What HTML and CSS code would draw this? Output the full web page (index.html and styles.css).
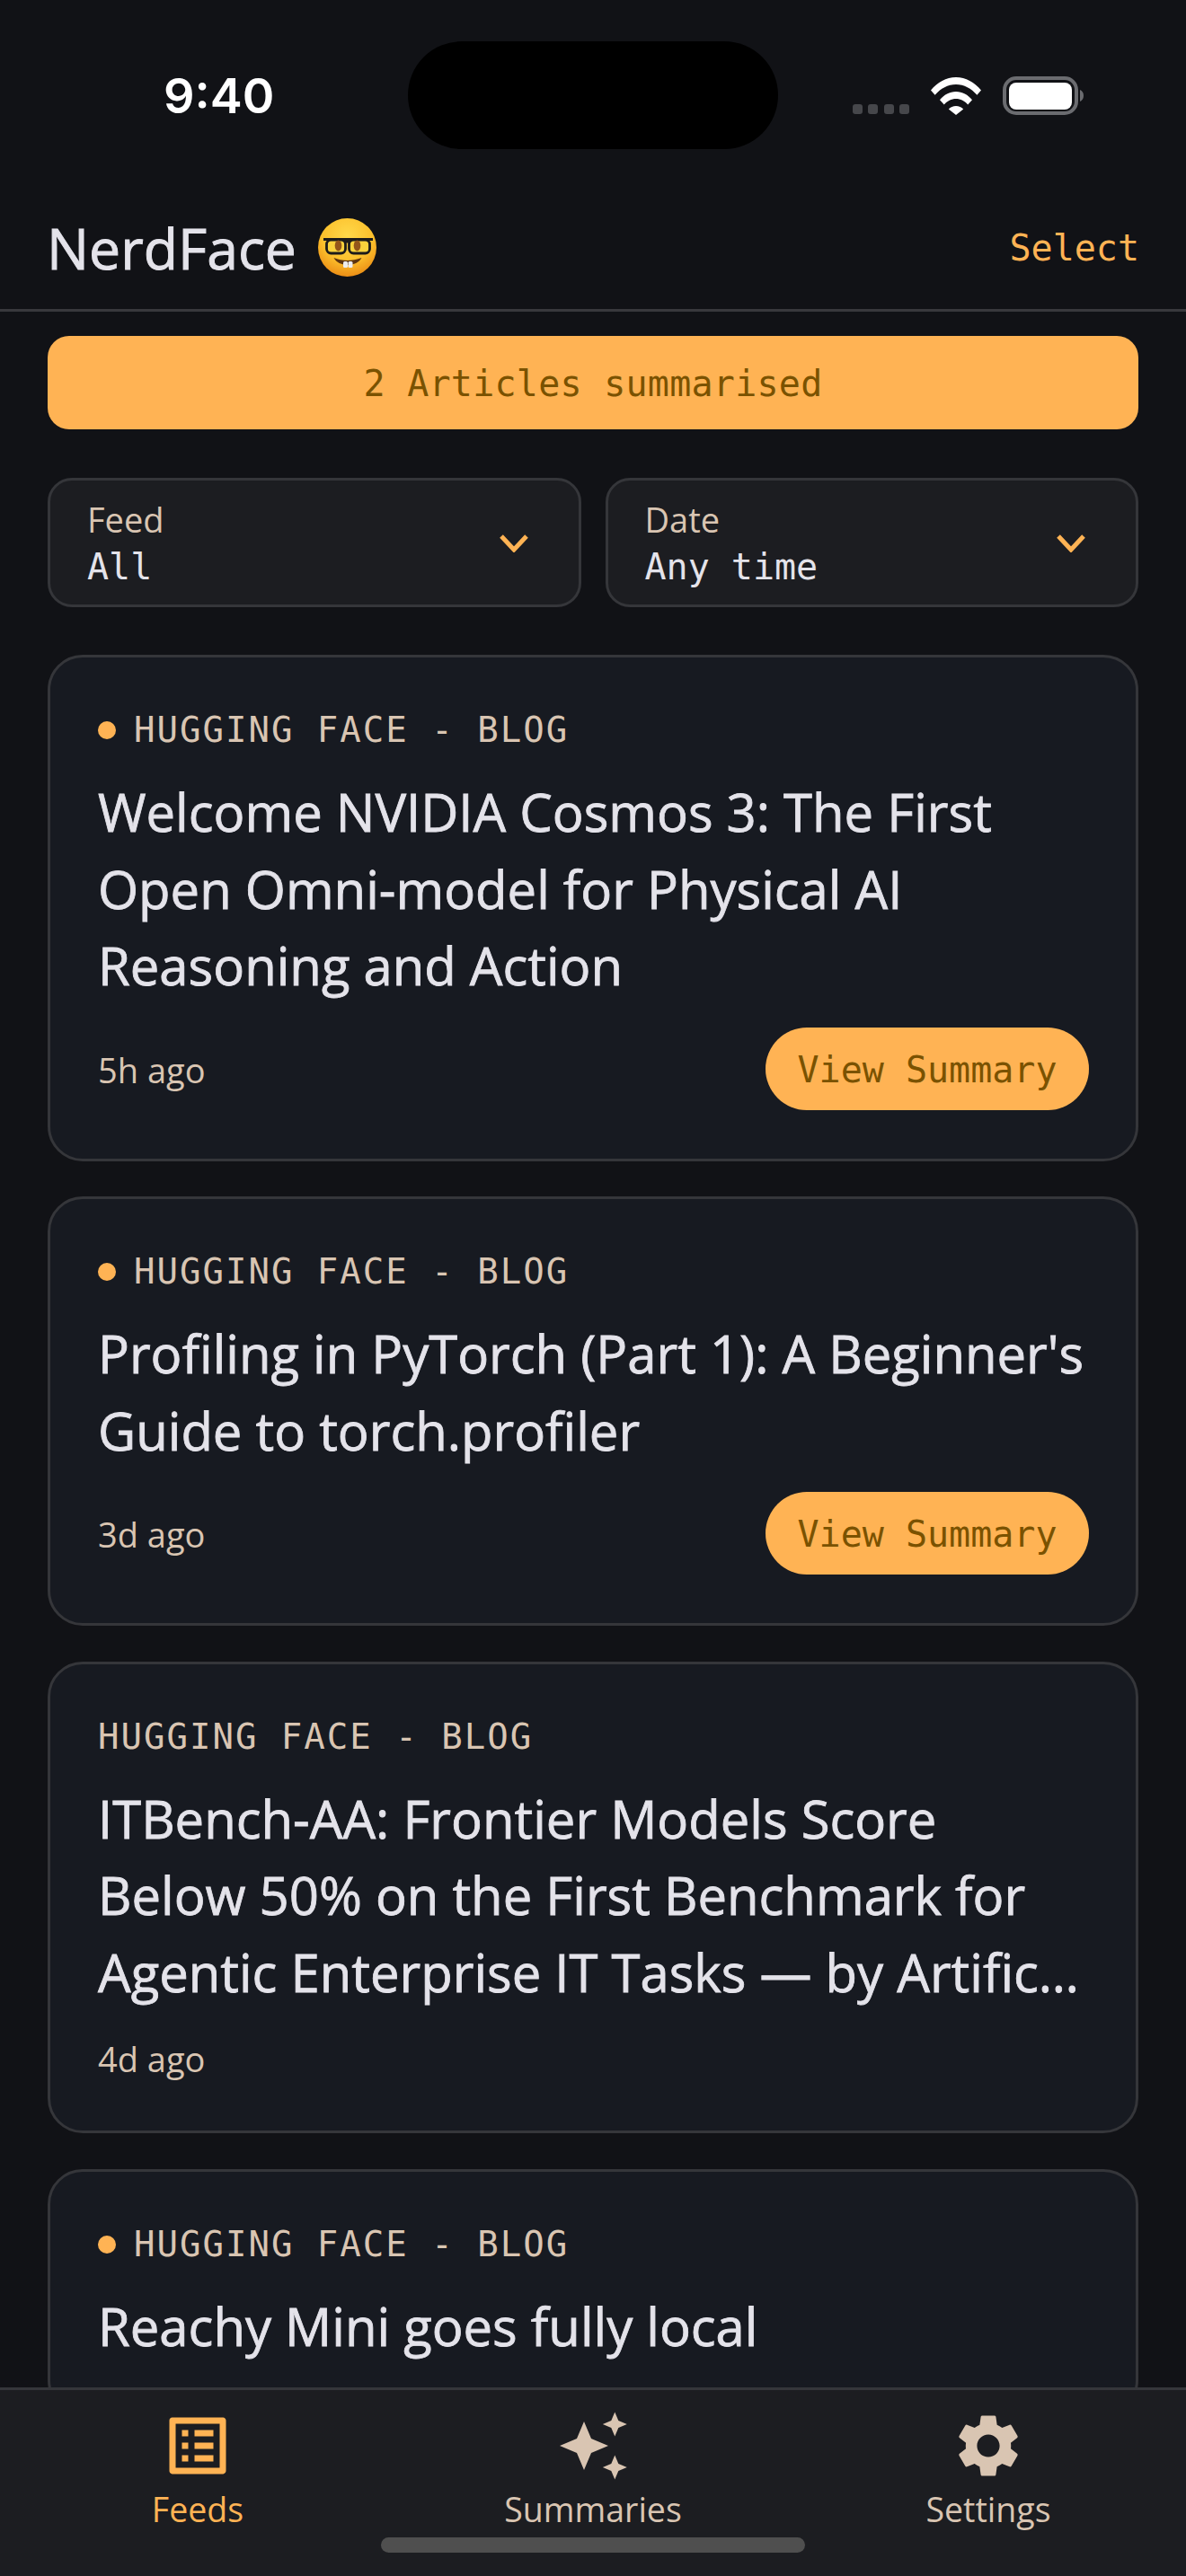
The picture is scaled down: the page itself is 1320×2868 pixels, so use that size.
FILE: index.html
```html
<!DOCTYPE html>
<html lang="en">
<head>
<meta charset="utf-8">
<title>NerdFace</title>
<link rel="stylesheet" href="styles.css">
</head>
<body>
<div class="phone">
  <div class="status">
    <span class="time">9:40</span>
    <div class="island"></div>
    <div class="status-icons">
      <div class="signal"><i></i><i></i><i></i><i></i></div>
      <svg class="wifi" viewBox="0 0 56 42"><path d="M0 14.500C7.500 5.500 17 0 28 0s20.500 5.500 28 14.500l-4.600 5.200C45 12.500 37 8 28 8S11 12.500 4.600 19.700z"/><path d="M10 25.200C14.500 19.600 21 16 28 16s13.500 3.600 18 9.200l-4.800 5.200C37.800 26.500 33.200 24 28 24s-9.800 2.500-13.200 6.400z"/><path d="M19.800 35.600C21.800 33.300 24.800 32 28 32s6.200 1.300 8.200 3.600L28 42z"/></svg>
      <svg class="battery" viewBox="0 0 90 43"><rect x="2" y="2" width="80" height="39" rx="13" fill="none" stroke="#6b6c70" stroke-width="4"/><rect x="7" y="7" width="70" height="30" rx="8" fill="#fff"/><path d="M86 15c2.500 1 4 3.500 4 6.500s-1.500 5.500-4 6.500z" fill="#6b6c70"/></svg>
    </div>
  </div>
  <header class="topbar">
    <div class="brand"><span>NerdFace</span>
      <svg class="emoji" viewBox="0 0 65 65">
        <defs><radialGradient id="face" cx="50%" cy="30%" r="72%"><stop offset="0" stop-color="#ffd94a"/><stop offset=".6" stop-color="#fcc02c"/><stop offset="1" stop-color="#ea8a14"/></radialGradient></defs>
        <circle cx="32.500" cy="32.500" r="32.500" fill="url(#face)"/>
        <rect x="9.500" y="24" width="21" height="15" rx="5" fill="#f8d23c" stroke="#1c1b1a" stroke-width="2.800"/>
        <rect x="34.500" y="24" width="23" height="15" rx="5" fill="#f8d23c" stroke="#1c1b1a" stroke-width="2.800"/>
        <path d="M6 23.500h55M30 26h5" stroke="#1c1b1a" stroke-width="3" fill="none"/>
        <ellipse cx="22.500" cy="30.500" rx="3.800" ry="6" fill="#93561a"/><ellipse cx="43.500" cy="30.500" rx="3.800" ry="6" fill="#93561a"/>
        <path d="M17.500 44c9.500 4 20.500 4 31 0-5 10.500-26 10.500-31 0z" fill="#5c3410"/>
        <rect x="28" y="48" width="5" height="7" rx="1.500" fill="#eee"/><rect x="33.500" y="48" width="5" height="7" rx="1.500" fill="#eee"/>
      </svg>
    </div>
    <span class="select">Select</span>
  </header>
  <main class="content">
    <div class="banner">2 Articles summarised</div>
    <div class="filters">
      <div class="filter">
        <div class="filter-text"><span class="filter-label">Feed</span><span class="filter-value">All</span></div>
        <svg class="chev" viewBox="0 0 32 20"><path d="M2 2l14 15L30 2"/></svg>
      </div>
      <div class="filter">
        <div class="filter-text"><span class="filter-label">Date</span><span class="filter-value">Any time</span></div>
        <svg class="chev" viewBox="0 0 32 20"><path d="M2 2l14 15L30 2"/></svg>
      </div>
    </div>
    <article class="card">
      <div class="tag"><i class="dot"></i>HUGGING FACE - BLOG</div>
      <h2 class="title">Welcome NVIDIA Cosmos 3: The First Open Omni-model for Physical AI Reasoning and Action</h2>
      <div class="meta"><span class="ago">5h ago</span><span class="btn">View Summary</span></div>
    </article>
    <article class="card">
      <div class="tag"><i class="dot"></i>HUGGING FACE - BLOG</div>
      <h2 class="title">Profiling in PyTorch (Part 1): A Beginner's Guide to torch.profiler</h2>
      <div class="meta"><span class="ago">3d ago</span><span class="btn">View Summary</span></div>
    </article>
    <article class="card">
      <div class="tag">HUGGING FACE - BLOG</div>
      <h2 class="title">ITBench-AA: Frontier Models Score Below 50% on the First Benchmark for Agentic Enterprise IT Tasks — by Artific…</h2>
      <div class="meta"><span class="ago">4d ago</span></div>
    </article>
    <article class="card">
      <div class="tag"><i class="dot"></i>HUGGING FACE - BLOG</div>
      <h2 class="title">Reachy Mini goes fully local</h2>
    </article>
  </main>
  <nav class="tabs">
    <div class="tab active">
      <svg class="tab-icon" viewBox="0 0 24 24"><path d="M19 5v14H5V5h14m1.100-2H3.900c-.5 0-.9.4-.9.9v16.200c0 .4.4.9.9.9h16.200c.4 0 .9-.5.9-.9V3.900c0-.5-.5-.9-.9-.9zM11 7h6v2h-6V7zm0 4h6v2h-6v-2zm0 4h6v2h-6v-2zM7 7h2v2H7V7zm0 4h2v2H7v-2zm0 4h2v2H7v-2z"/></svg>
      <span>Feeds</span>
    </div>
    <div class="tab">
      <svg class="tab-icon" viewBox="0 0 84 84"><path d="M32 15l8 19 19 8-19 8-8 19-8-19-19-8 19-8z"/><path d="M66.300 4.500l4 9.500 9.500 4-9.500 4-4 9.500-4-9.500-9.500-4 9.500-4z"/><path d="M66.300 52.500l4 9.500 9.500 4-9.500 4-4 9.500-4-9.500-9.500-4 9.500-4z"/></svg>
      <span>Summaries</span>
    </div>
    <div class="tab">
      <svg class="tab-icon" viewBox="0 0 24 24"><path d="M19.140 12.940c.04-.3.06-.61.06-.94 0-.32-.02-.64-.07-.94l2.030-1.580c.18-.14.23-.41.12-.61l-1.920-3.320c-.12-.22-.37-.29-.59-.22l-2.390.96c-.5-.38-1.030-.7-1.620-.94l-.36-2.540c-.04-.24-.24-.41-.48-.41h-3.840c-.24 0-.43.17-.47.41l-.36 2.540c-.59.24-1.130.57-1.620.94l-2.390-.96c-.22-.08-.47 0-.59.22L2.740 8.870c-.12.21-.08.47.12.61l2.030 1.580c-.05.3-.09.63-.09.94s.02.64.07.94l-2.030 1.580c-.18.14-.23.41-.12.61l1.920 3.320c.12.22.37.29.59.22l2.390-.96c.5.38 1.030.7 1.620.94l.36 2.540c.05.24.24.41.48.41h3.840c.24 0 .44-.17.47-.41l.36-2.540c.59-.24 1.130-.56 1.620-.94l2.390.96c.22.08.47 0 .59-.22l1.920-3.320c.12-.22.07-.47-.12-.61l-2.010-1.580zM12 15.600c-1.980 0-3.600-1.620-3.600-3.600s1.620-3.600 3.600-3.600 3.600 1.620 3.600 3.600-1.620 3.600-3.600 3.600z"/></svg>
      <span>Settings</span>
    </div>
    <div class="home-bar"></div>
  </nav>
</div>
</body>
</html>
```
FILE: styles.css
```css
* { box-sizing: border-box; }
html, body { margin: 0; padding: 0; background: #111216; }
body { font-family: "Open Sans", "Liberation Sans", sans-serif; color: #e4e3ea; }
.phone { width: 1320px; height: 2868px; display: flex; flex-direction: column; overflow: hidden; background: #111216; }

.status { position: relative; flex: none; height: 166px; padding: 80px 114px 0 182px; display: flex; justify-content: space-between; align-items: flex-start; }
.time { font-family: "Inter", sans-serif; font-weight: 600; font-size: 54px; line-height: 54px; color: #fff; }
.island { position: absolute; left: 454px; top: 46px; width: 412px; height: 120px; border-radius: 60px; background: #000; }
.status-icons { display: flex; align-items: flex-end; gap: 24px; padding-top: 5px; }
.signal { display: flex; gap: 6.500px; padding-bottom: 1px; }
.signal i { width: 11px; height: 11px; border-radius: 3px; background: #46474b; }
.wifi { width: 56px; height: 42px; fill: #fff; }
.battery { width: 90px; height: 43px; }

.topbar { flex: none; height: 181px; padding: 41px 52px 0 52px; display: flex; justify-content: space-between; align-items: center; border-bottom: 3px solid #38383c; }
.brand { display: flex; align-items: center; gap: 24px; font-size: 62.500px; font-weight: 500; color: #e4e3ea; -webkit-text-stroke: .9px #e4e3ea; }
.emoji { width: 65px; height: 65px; }
.select { font-family: "DejaVu Sans Mono", monospace; font-size: 40px; color: #ffb354; }

.content { flex: 1; min-height: 0; overflow: hidden; padding: 27px 53px 0; display: flex; flex-direction: column; gap: 39.500px; }
.banner { flex: none; height: 104px; padding-top: 2px; border-radius: 24px; background: #ffb354; color: #7a5200; font-family: "DejaVu Sans Mono", monospace; font-size: 40px; letter-spacing: .25px; display: flex; align-items: center; justify-content: center; }
.filters { flex: none; display: grid; grid-template-columns: 1fr 1fr; gap: 27px; margin: 14.500px 0 13.500px; }
.filter { height: 144px; border: 3px solid #35363a; border-radius: 27px; background: #1c1d21; padding: 1px 56px 0 41px; display: flex; align-items: center; justify-content: space-between; }
.filter-text { display: flex; flex-direction: column; }
.filter-label { font-size: 38px; line-height: 51px; color: #d9c5b2; }
.filter-value { font-family: "DejaVu Sans Mono", monospace; font-size: 40px; line-height: 51px; padding-top: 2px; color: #e4e3ea; }
.chev { width: 32px; height: 20px; fill: none; stroke: #ffb354; stroke-width: 5px; }

.card { flex: none; border: 3px solid #35363a; border-radius: 39px; background: #171a21; padding: 53px 52px 54px 53px; }
.tag { display: flex; align-items: center; padding-top: 2px; font-family: "DejaVu Sans Mono", monospace; font-size: 39px; line-height: 52px; letter-spacing: 2px; color: #d9c5b2; }
.dot { width: 20px; height: 20px; border-radius: 50%; background: #ffb354; margin-right: 20px; }
.title { margin: 22px 0 0; font-size: 58px; font-weight: 500; line-height: 85.500px; color: #e4e3ea; -webkit-text-stroke: .8px #e4e3ea; }
.meta { margin-top: 26px; display: flex; align-items: center; justify-content: space-between; }
.ago { font-size: 38px; color: #d9c5b2; padding-top: 2px; }
.btn { width: 360px; height: 92px; padding-top: 2px; border-radius: 46px; background: #ffb354; color: #7a5200; font-family: "DejaVu Sans Mono", monospace; font-size: 40px; display: flex; align-items: center; justify-content: center; }

.tabs { position: relative; flex: none; height: 210px; border-top: 3px solid #35363a; background: #1c1d21; display: grid; grid-template-columns: repeat(3, 1fr); align-items: start; padding-top: 20px; }
.tab { display: flex; flex-direction: column; align-items: center; font-size: 37.500px; line-height: 46px; color: #d9c5b2; }
.tab.active { color: #ffb354; }
.tab-icon { width: 84px; height: 84px; fill: currentColor; margin-bottom: 6px; }
.home-bar { position: absolute; left: 424px; top: 164px; width: 472px; height: 17px; border-radius: 9px; background: #4f4f4f; }
```
